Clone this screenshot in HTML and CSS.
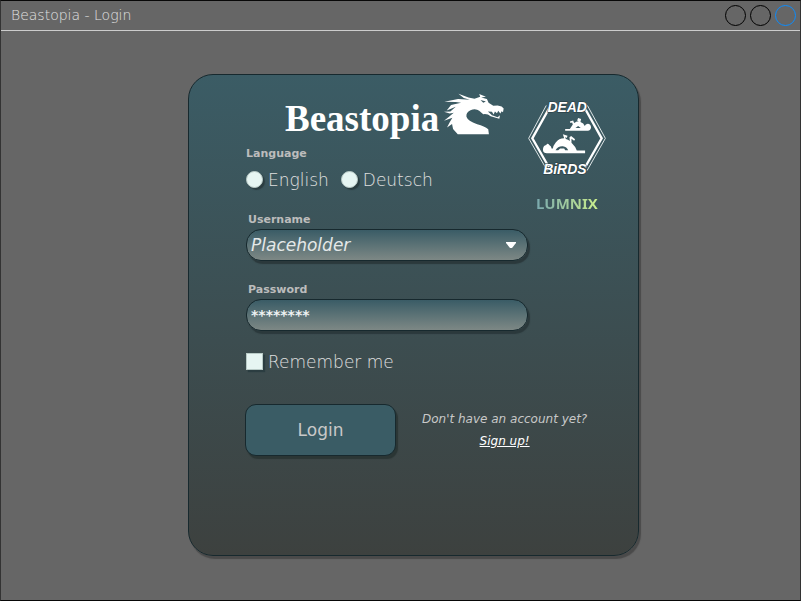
FILE: index.html
```html
<!DOCTYPE html>
<html lang="en">
<head>
<meta charset="utf-8">
<title>Beastopia - Login</title>
<link rel="stylesheet" href="styles.css">
</head>
<body>
<div class="window">
  <header class="titlebar">
    <h1 class="title">Beastopia - Login</h1>
    <div class="controls">
      <button class="control" type="button" aria-label="Minimize"></button>
      <button class="control" type="button" aria-label="Maximize"></button>
      <button class="control control-close" type="button" aria-label="Close"></button>
    </div>
  </header>
  <main class="content">
    <form class="card">
      <div class="fields">
        <div class="brand">
          <span class="brand-name">Beastopia</span>
          <svg class="dragon" viewBox="160 25 182 125" aria-hidden="true">
            <path d="M204 148H297L295 133Q284 124 262 118Q234 109 230 96Q228 82 242 76Q258 70 268 78L280 88Q293 86 302 94L328 102L330 91L323 97L306 91L294 80L306 81L311 89L315 80L321 85L325 78L331 86L335 79L339 82L341 71L335 65L323 62L310 63L296 54L291 43L274 38L288 36L268 28L271 36L254 42L236 38L206 27L222 40L240 45L205 43L164 51L198 52L214 54L184 61L171 77L198 66L182 80L163 81L180 86L192 84L178 96L163 108L188 99L180 112L172 128L187 117L190 132Z"/>
            <path class="cut" d="M272 46L288 50L280 54Z"/>
          </svg>
        </div>
        <fieldset class="language">
          <legend class="label">Language</legend>
          <div class="choices">
            <label class="choice"><input class="tick radio" type="radio" name="language">English</label>
            <label class="choice"><input class="tick radio" type="radio" name="language">Deutsch</label>
          </div>
        </fieldset>
        <div class="field">
          <label class="label" for="username">Username</label>
          <div class="combo">
            <select class="input select" id="username"><option>Placeholder</option></select>
            <svg class="arrow" viewBox="0 0 10 6" aria-hidden="true"><path d="M0 0H10V1L6 6H4L0 1Z"/></svg>
          </div>
        </div>
        <div class="field">
          <label class="label" for="password">Password</label>
          <input class="input password" id="password" type="password" placeholder="********">
        </div>
        <label class="choice"><input class="tick" type="checkbox">Remember me</label>
      </div>
      <aside class="partners">
        <svg class="emblem" viewBox="27 21 235 246" role="img" aria-label="Dead Birds">
          <g class="hexagon">
            <path d="M82 46L29 145L85 242M206 46L260 145L205 242"/>
            <path class="thick" d="M92 52L40 145L90 232M197 52L249 145L199 232"/>
          </g>
          <g class="birds">
            <path d="M72 180Q72 167 82 165Q86 157 91 165Q98 168 98 176H102Q103 166 110 158Q120 145 136 145L132 133L146 137L144 144L139 141L141 147Q148 149 153 153L152 142L157 138L169 148L166 152L158 146L158 158Q170 169 174 182H199V190H84Q73 190 72 180Z"/>
            <path d="M217 112Q216 101 207 101Q200 102 198 108Q195 99 185 96L187 87L178 84L175 91L180 94L174 94L166 99L163 91L153 94L155 99L160 97L162 103L153 117H139V122H207Q216 121 217 112Z"/>
            <path class="cut" d="M110 181Q117 168 132 169Q144 171 148 181H139L136 176H124L118 181ZM170 114L178 108L186 114Z"/>
          </g>
          <text class="emblem-text" x="145" y="66">DEAD</text>
          <text class="emblem-text" x="138" y="252">BiRDS</text>
        </svg>
        <span class="lumnix">LUMNIX</span>
      </aside>
      <div class="actions">
        <button class="login" type="submit">Login</button>
        <p class="signup">Don't have an account yet?<a class="signup-link" href="#">Sign up!</a></p>
      </div>
    </form>
  </main>
</div>
</body>
</html>
```

FILE: styles.css
```css
* { box-sizing: border-box; }

body {
  margin: 0;
  background: #666;
  color: #c8c8c8;
  font-family: "DejaVu Sans", sans-serif;
  font-weight: 200;
}

.window {
  display: flex;
  flex-direction: column;
  min-height: 100vh;
  border: 1px solid #080808;
  border-left-color: #333;
  border-right-color: #333;
}

.titlebar {
  display: flex;
  align-items: center;
  justify-content: space-between;
  height: 30px;
  padding: 0 4px 2px 10px;
  border-bottom: 1px solid #ccc;
}

.title {
  margin: 0;
  color: #e0e0e0;
  font-size: 14px;
  font-weight: 200;
}

.controls { display: flex; gap: 4px; padding-top: 2px; }

.control {
  width: 21px;
  height: 21px;
  padding: 0;
  border: 1px solid #000;
  border-radius: 50%;
  background: none;
}

.control-close { border-color: #0a8cff; }

.content {
  display: flex;
  flex: 1;
  align-items: center;
  justify-content: center;
  padding: 0 0 2px 26px;
}

.card {
  display: grid;
  grid-template-columns: 282px 1fr;
  align-content: start;
  row-gap: 32px;
  width: 451px;
  padding: 17px 22px 99px 57px;
  border: 1px solid #17292e;
  border-radius: 25px;
  background: linear-gradient(#3b5c65, #3d413f);
  box-shadow: 2px 3px 1px #4a4a4a;
}

.fields { display: flex; flex-direction: column; }

.brand {
  display: flex;
  align-items: center;
  gap: 4px;
  height: 54px;
  margin-right: -10px;
  padding-left: 39px;
  color: #fff;
}

.brand-name {
  font-family: "Liberation Serif", serif;
  font-size: 37px;
  font-weight: 700;
}

.dragon { width: 61px; height: 42px; margin-bottom: 10px; fill: #fff; }
.cut { fill: #3b5860; }

.language { margin: 0 0 22px; padding: 0; border: 0; }

.label {
  display: block;
  padding: 0 2px;
  color: #bcbcbc;
  font-size: 11px;
  font-weight: 700;
  line-height: 16px;
}

.language .label { padding: 0; }

.choices { display: flex; gap: 12px; padding-top: 8px; }

.choice {
  display: flex;
  align-items: center;
  gap: 5px;
  color: #e0e0e0;
  font-size: 17px;
  line-height: 20px;
}

.tick {
  appearance: none;
  width: 17px;
  height: 17px;
  margin: 0;
  border: 1px solid #b8cac6;
  background: #e6f5f2;
  box-shadow: 2px 2px 1px #2b3d41;
}

.radio { border-radius: 50%; }

.field { margin-bottom: 21px; }

.combo { position: relative; }

.input {
  appearance: none;
  display: block;
  width: 100%;
  height: 32px;
  margin-top: 1px;
  padding: 0 4px;
  border: 1px solid #17292e;
  border-radius: 15px;
  background: linear-gradient(#3a5c66, #7d8885);
  box-shadow: 2px 3px 1px #2b393c;
  color: #e4e8e8;
  font: italic 200 17px "DejaVu Sans", sans-serif;
}

.arrow {
  position: absolute;
  top: 13px;
  right: 12px;
  width: 10px;
  height: 6px;
  fill: #fff;
  pointer-events: none;
}

.password { font-size: 14px; font-weight: 700; }
.password::placeholder { color: #eef2f2; opacity: 1; }

.partners {
  display: flex;
  flex-direction: column;
  align-items: center;
  gap: 14px;
  margin-right: 22px;
  padding-top: 5px;
}

.emblem { flex: none; width: 78px; height: 82px; overflow: visible; }
.hexagon { fill: none; stroke: #dfe6e7; stroke-width: 3; }
.thick { stroke: #fff; stroke-width: 7; }
.birds { fill: #fff; }

.emblem-text {
  fill: #fff;
  stroke: #26383d;
  stroke-width: 3;
  paint-order: stroke;
  font: italic 700 42px "Liberation Sans", sans-serif;
  text-anchor: middle;
}

.lumnix {
  background: linear-gradient(90deg, #7aa9af, #c9ee8c);
  background-clip: text;
  color: transparent;
  font: 700 15px/20px "Noto Sans", sans-serif;
}

.actions {
  display: flex;
  grid-column: 1 / -1;
  align-items: center;
  gap: 26px;
  margin-left: -1px;
}

.login {
  width: 151px;
  height: 52px;
  padding: 0;
  border: 1px solid #17292e;
  border-radius: 11px;
  background: #3a5c65;
  box-shadow: 2px 3px 1px #2b3635;
  color: inherit;
  font: 400 17px "DejaVu Sans", sans-serif;
}

.signup {
  margin: 0;
  font-size: 12px;
  font-style: italic;
  font-weight: 400;
  line-height: 22px;
  text-align: center;
  white-space: nowrap;
}

.signup-link { display: block; color: #fff; }
```
